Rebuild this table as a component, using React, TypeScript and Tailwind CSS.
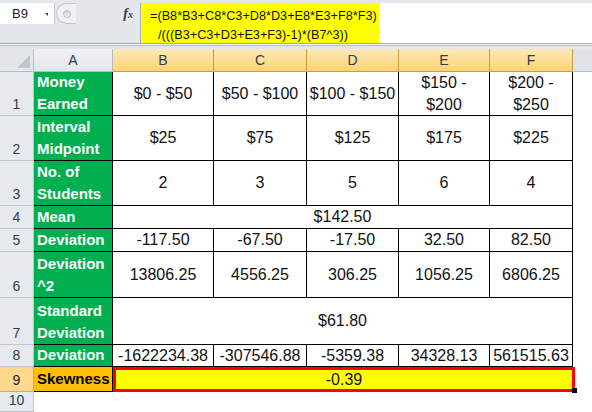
import React from "react"

type Row = {
  n: string
  label: string[]
  cells?: string[][]
  merged?: string
}

const rows: Row[] = [
  {
    n: "1",
    label: ["Money", "Earned"],
    cells: [["$0 - $50"], ["$50 - $100"], ["$100 - $150"], ["$150 -", "$200"], ["$200 -", "$250"]],
  },
  { n: "2", label: ["Interval", "Midpoint"], cells: [["$25"], ["$75"], ["$125"], ["$175"], ["$225"]] },
  { n: "3", label: ["No. of", "Students"], cells: [["2"], ["3"], ["5"], ["6"], ["4"]] },
  { n: "4", label: ["Mean"], merged: "$142.50" },
  { n: "5", label: ["Deviation"], cells: [["-117.50"], ["-67.50"], ["-17.50"], ["32.50"], ["82.50"]] },
  {
    n: "6",
    label: ["Deviation", "^2"],
    cells: [["13806.25"], ["4556.25"], ["306.25"], ["1056.25"], ["6806.25"]],
  },
  { n: "7", label: ["Standard", "Deviation"], merged: "$61.80" },
  {
    n: "8",
    label: ["Deviation"],
    cells: [["-1622234.38"], ["-307546.88"], ["-5359.38"], ["34328.13"], ["561515.63"]],
  },
]

const cols = ["B", "C", "D", "E", "F"]

function RowHead({ n, active }: { n: string; active?: boolean }) {
  return (
    <div
      className={
        "flex items-end justify-center border-b border-r leading-[22px] text-[14px] " +
        (active
          ? "bg-[#ffd88c] border-[#d9a94a] text-[#1c1c1c]"
          : "bg-[#e6e9ee] border-[#c0c6ce] text-[#2f3d4f]")
      }
    >
      {n}
    </div>
  )
}

function Lines({ lines }: { lines: string[] }) {
  return (
    <div>
      {lines.map((l) => (
        <div key={l}>{l}</div>
      ))}
    </div>
  )
}

export default function App() {
  return (
    <div className="relative w-[592px] h-[412px] overflow-hidden bg-white font-['Liberation_Sans',Arial,sans-serif] text-[#111]">
      {/* formula bar */}
      <div className="h-[49px] bg-[#e3e6eb]">
        <div className="flex h-[44px] pt-[3px] border-b border-[#a3a9b1]">
          <div className="w-[140px] flex flex-col">
            <div className="flex h-[21px] items-stretch">
              <div className="relative w-[55px] bg-white border-r border-[#c6ccd3] pl-[12px] text-[13px] leading-[21px] text-[#1a1a1a]">
                B9
                <span className="absolute right-[6px] top-[10px] w-0 h-0 border-l-[3px] border-l-transparent border-t-[3px] border-t-[#333]" />
              </div>
              <div className="relative w-[20px] ml-[1px] rounded-l-full border-l border-t border-b border-[#c2c8cf] bg-[#eef0f3]">
                <div className="absolute left-[6px] top-[6px] w-[8px] h-[8px] rounded-full bg-gradient-to-b from-[#c9ced5] to-[#f4f5f7] border border-[#b8bec6]" />
              </div>
              <div className="flex-1 flex items-center justify-end pr-[7px]">
                <span className="font-['Liberation_Serif',serif] italic font-bold text-[14px] text-[#3b3b3b]">
                  f<span className="text-[10px]">x</span>
                </span>
              </div>
            </div>
          </div>
          <div className="flex-1 flex bg-white border-l border-[#a9afb7]">
            <div className="w-[238px] bg-[#ffff00] pl-[9px] pt-[4px] text-[12.7px] leading-[19px] text-[#111]">
              <div>=(B8*B3+C8*C3+D8*D3+E8*E3+F8*F3)</div>
              <div className="pl-[8px]">/(((B3+C3+D3+E3+F3)-1)*(B7^3))</div>
            </div>
          </div>
        </div>
        <div className="h-[2px] bg-[#f6f7f9] border-b border-[#b9bfc7]" />
      </div>

      {/* sheet */}
      <div className="grid grid-cols-[34px_79px_101px_93px_92px_91px_83px_1fr] grid-rows-[23px_44px_45px_45px_23px_23px_46px_47px_22px_25px_20px] text-[16px]">
        {/* header row */}
        <div className="relative bg-[#e3e6eb] border-r border-b border-[#b5bcc5]">
          <svg className="absolute right-[3px] bottom-[3px]" width="13" height="13" viewBox="0 0 13 13">
            <polygon points="13,0 13,13 0,13" fill="#c0c6ce" />
          </svg>
        </div>
        <div className="flex items-center justify-center bg-gradient-to-b from-[#f0f2f5] to-[#e2e6eb] border-r border-b border-[#b5bcc5] text-[14px] text-[#2f3d4f]">
          A
        </div>
        {cols.map((c) => (
          <div
            key={c}
            className="flex items-center justify-center bg-gradient-to-b from-[#fde9b8] to-[#fbd46f] border-r border-b border-[#c99c45] text-[14px] text-[#2f3d4f]"
          >
            {c}
          </div>
        ))}
        <div className="bg-[#dfe2e7] border-b border-[#b5bcc5]" />

        {rows.map((r) => (
          <React.Fragment key={r.n}>
            <RowHead n={r.n} />
            <div className="flex items-end bg-[#00b050] border-r border-b border-black pl-[3px] font-bold text-[15px] text-white leading-[22px]">
              <Lines lines={r.label} />
            </div>
            {r.merged ? (
              <div className="col-span-5 flex items-center justify-center border-r border-b border-black leading-[22px]">
                {r.merged}
              </div>
            ) : (
              r.cells!.map((v, i) => (
                <div
                  key={i}
                  className="flex items-center justify-center text-center border-r border-b border-black leading-[22px]"
                >
                  <Lines lines={v} />
                </div>
              ))
            )}
            <div />
          </React.Fragment>
        ))}

        {/* row 9 */}
        <RowHead n="9" active />
        <div className="flex items-center bg-[#ffc000] border-r border-b border-black pl-[3px] font-bold text-[15px] text-black leading-[22px]">
          Skewness
        </div>
        <div className="col-span-5 flex items-center justify-center bg-[#ffff00] border-[3px] border-[#ff0000] mr-[-2px] leading-[22px]">
          -0.39
        </div>
        <div />

        {/* row 10 */}
        <RowHead n="10" />
        <div className="col-span-7" />
      </div>

      <div className="absolute left-[572px] top-[388px] w-[5px] h-[5px] bg-black" />
    </div>
  )
}
